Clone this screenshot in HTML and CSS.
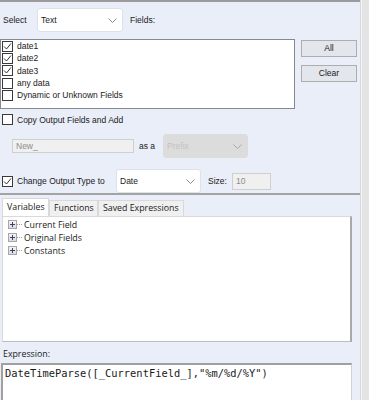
FILE: index.html
```html
<!DOCTYPE html>
<html lang="en">
<head>
    <meta charset="UTF-8">
    <title>Multi-Field Formula</title>
    <link rel="stylesheet" href="styles.css">
</head>
<body>
    <div class="window">
        <div class="main">
            <div class="top">
                <div class="row row-select">
                    <span class="label">Select</span>
                    <div class="combo combo-select">
                        <span>Text</span>
                        <svg class="chev" width="9" height="5" viewBox="0 0 9 5"><path d="M0.5 0.5 L4.5 4.5 L8.5 0.5" fill="none" stroke="#8a8a8a"/></svg>
                    </div>
                    <span class="label">Fields:</span>
                </div>
                <div class="row row-fields">
                    <ul class="fields">
                        <li><span class="box checked"><svg width="9" height="9" viewBox="0 0 9 9"><path d="M1 4.5 L3.5 7 L8 1.5" fill="none" stroke="#333" stroke-width="1"/></svg></span>date1</li>
                        <li><span class="box checked"><svg width="9" height="9" viewBox="0 0 9 9"><path d="M1 4.5 L3.5 7 L8 1.5" fill="none" stroke="#333" stroke-width="1"/></svg></span>date2</li>
                        <li><span class="box checked"><svg width="9" height="9" viewBox="0 0 9 9"><path d="M1 4.5 L3.5 7 L8 1.5" fill="none" stroke="#333" stroke-width="1"/></svg></span>date3</li>
                        <li><span class="box"></span>any data</li>
                        <li><span class="box"></span>Dynamic or Unknown Fields</li>
                    </ul>
                    <div class="buttons">
                        <div class="btn">All</div>
                        <div class="btn">Clear</div>
                    </div>
                </div>
                <div class="row row-copy">
                    <span class="box"></span>
                    <span class="label">Copy Output Fields and Add</span>
                </div>
                <div class="row row-prefix">
                    <div class="input input-new">New_</div>
                    <span class="label">as a</span>
                    <div class="combo combo-prefix">
                        <span>Prefix</span>
                        <svg class="chev" width="9" height="5" viewBox="0 0 9 5"><path d="M0.5 0.5 L4.5 4.5 L8.5 0.5" fill="none" stroke="#a8a8a8"/></svg>
                    </div>
                </div>
                <div class="row row-type">
                    <span class="box checked"><svg width="9" height="9" viewBox="0 0 9 9"><path d="M1 4.5 L3.5 7 L8 1.5" fill="none" stroke="#333" stroke-width="1"/></svg></span>
                    <span class="label label-type">Change Output Type to</span>
                    <div class="combo combo-type">
                        <span>Date</span>
                        <svg class="chev" width="9" height="5" viewBox="0 0 9 5"><path d="M0.5 0.5 L4.5 4.5 L8.5 0.5" fill="none" stroke="#8a8a8a"/></svg>
                    </div>
                    <span class="label label-size">Size:</span>
                    <div class="input input-size">10</div>
                </div>
            </div>
            <div class="bottom">
                <div class="tabs">
                    <div class="tab active">Variables</div>
                    <div class="tab">Functions</div>
                    <div class="tab">Saved Expressions</div>
                </div>
                <div class="tree">
                    <div class="node"><span class="plus"></span><span class="dots"></span>Current Field</div>
                    <div class="node"><span class="plus"></span><span class="dots"></span>Original Fields</div>
                    <div class="node"><span class="plus"></span><span class="dots"></span>Constants</div>
                </div>
                <div class="expr-label">Expression:</div>
                <div class="expr">DateTimeParse([_CurrentField_],"%m/%d/%Y")</div>
            </div>
        </div>
        <div class="strip"></div>
    </div>
</body>
</html>
```

FILE: styles.css
```css
html, body {
    margin: 0;
    padding: 0;
}
body {
    width: 369px;
    height: 400px;
    overflow: hidden;
    font-family: "Liberation Sans", Arial, sans-serif;
    font-size: 8.5px;
    color: #1a1a1a;
}
.window {
    display: flex;
    height: 400px;
}
.main {
    width: 361px;
    background-color: #e9eef9;
    border-right: 1px solid #d2d7e0;
}
.strip {
    width: 7px;
    background-color: #e4e4e4;
    border-left: 1px solid #f6f6f6;
}
.top {
    height: 191px;
    border-top: 2px solid #9c9c9c;
    border-bottom: 2px solid #a4a4a4;
}
.row {
    display: flex;
    align-items: center;
    white-space: nowrap;
}
.row-select {
    margin-top: 6px;
    height: 24px;
}
.row-select .label:first-child {
    margin-left: 3px;
    width: 34px;
}
.combo {
    display: flex;
    align-items: center;
    justify-content: space-between;
    box-sizing: border-box;
    height: 24px;
    padding: 0 5px 0 3px;
    background-color: #fff;
    border: 1px solid #dde1e8;
    border-radius: 3px;
}
.combo-select {
    width: 86px;
    margin-right: 7px;
}
.chev {
    display: block;
}
.row-fields {
    align-items: flex-start;
    margin-top: 7px;
}
.fields {
    list-style-type: none;
    margin: 0;
    padding: 0;
    box-sizing: border-box;
    width: 295px;
    height: 70px;
    background-color: #fff;
    border: 1px solid #848a94;
}
.fields li {
    display: flex;
    align-items: center;
    height: 12.3px;
    padding-left: 1px;
}
.box {
    display: inline-flex;
    align-items: center;
    justify-content: center;
    box-sizing: border-box;
    width: 11px;
    height: 11px;
    margin-right: 4px;
    background-color: #fff;
    border: 1px solid #3a3a3a;
}
.buttons {
    display: flex;
    flex-direction: column;
    gap: 8px;
    margin-left: 6px;
    margin-top: 1px;
}
.btn {
    box-sizing: border-box;
    width: 56px;
    height: 17px;
    line-height: 15px;
    text-align: center;
    background-color: #e3e6ec;
    border: 1px solid #adadad;
}
.row-copy {
    margin-top: 5px;
    padding-left: 2px;
}
.row-prefix {
    margin-top: 9px;
    padding-left: 12px;
}
.input {
    box-sizing: border-box;
    height: 14px;
    line-height: 12px;
    padding-left: 3px;
    color: #8c8c8c;
    background-color: #f0f0f0;
    border: 1px solid #cfcfcf;
}
.input-new {
    width: 122px;
    margin-right: 5px;
}
.combo-prefix {
    width: 85px;
    margin-left: 8px;
    color: #c2c2c2;
    background-color: #dcdcdc;
    border-color: #dcdcdc;
}
.row-type {
    margin-top: 11px;
    padding-left: 2px;
}
.label-type {
    width: 99px;
}
.combo-type {
    width: 85px;
}
.label-size {
    margin-left: 7px;
    width: 24px;
}
.input-size {
    width: 39px;
    height: 17px;
    line-height: 15px;
}
.bottom {
    font-family: "Open Sans", "Noto Sans", sans-serif;
    font-size: 8.8px;
}
.tabs {
    display: flex;
    margin-top: 3px;
    padding-left: 2px;
    height: 18px;
    align-items: flex-end;
    white-space: nowrap;
}
.tab {
    box-sizing: border-box;
    height: 16px;
    line-height: 14px;
    padding: 0 4px;
    background-color: #f0f0f0;
    border: 1px solid #d9d9d9;
    border-bottom: none;
}
.tab.active {
    height: 18px;
    line-height: 16px;
    background-color: #fff;
    width: 47px;
}
.tab:nth-child(2) {
    width: 49px;
}
.tree {
    box-sizing: border-box;
    width: 350px;
    height: 126px;
    margin-left: 2px;
    padding-top: 1px;
    background-color: #fff;
    border: 1px solid #d9d9d9;
    border-right: 2px solid #a9a9a9;
    border-bottom: 1px solid #bdbdbd;
}
.node {
    display: flex;
    align-items: center;
    height: 13px;
    padding-left: 5px;
}
.plus {
    position: relative;
    box-sizing: border-box;
    width: 9px;
    height: 9px;
    border: 1px solid #a6a6a6;
    background: linear-gradient(#f4f4f4, #dcdcdc);
}
.plus::before {
    content: "";
    position: absolute;
    left: 1px;
    top: 3px;
    width: 5px;
    height: 1px;
    background-color: #404070;
}
.plus::after {
    content: "";
    position: absolute;
    left: 3px;
    top: 1px;
    width: 1px;
    height: 5px;
    background-color: #404070;
}
.dots {
    width: 5px;
    margin-right: 2px;
    border-top: 1px dotted #a0a0a0;
}
.expr-label {
    margin-top: 5px;
    padding-left: 3px;
    height: 14px;
    line-height: 14px;
}
.expr {
    box-sizing: border-box;
    width: 351px;
    height: 40px;
    margin-left: 1px;
    margin-top: 2px;
    padding: 2px 2px;
    font-family: "DejaVu Sans Mono", "Liberation Mono", monospace;
    font-size: 10.4px;
    background-color: #fff;
    border-top: 2px solid #a0a0a0;
    border-left: 2px solid #a0a0a0;
    border-right: 1px solid #d0d0d0;
}
```
